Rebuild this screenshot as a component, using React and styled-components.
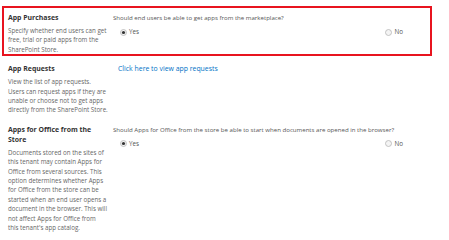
import styled, { createGlobalStyle } from "styled-components";

const GlobalStyle = createGlobalStyle`
  body {
    margin: 0;
    background: #fff;
    font-family: "Open Sans", "Noto Sans", sans-serif;
  }
`;

// description lines keep the wraps of the original settings page
const sections = [
  {
    title: ["App Purchases"],
    desc: [
      "Specify whether end users can get",
      "free, trial or paid apps from the",
      "SharePoint Store.",
    ],
    question: "Should end users be able to get apps from the marketplace?",
    highlight: true,
  },
  {
    title: ["App Requests"],
    desc: [
      "View the list of app requests.",
      "Users can request apps if they are",
      "unable or choose not to get apps",
      "directly from the SharePoint Store.",
    ],
    link: "Click here to view app requests",
  },
  {
    title: ["Apps for Office from the", "Store"],
    desc: [
      "Documents stored on the sites of",
      "this tenant may contain Apps for",
      "Office from several sources. This",
      "option determines whether Apps",
      "for Office from the store can be",
      "started when an end user opens a",
      "document in the browser. This will",
      "not affect Apps for Office from",
      "this tenant's app catalog.",
    ],
    question: "Should Apps for Office from the store be able to start when documents are opened in the browser?",
  },
];

const Radio = ({ checked }) => (
  <svg width="7" height="7" viewBox="0 0 7 7">
    <circle cx="3.5" cy="3.5" r="3" fill="#f4f4f4" stroke="#b5b5b5" strokeWidth="0.8" />
    {checked && <circle cx="3.5" cy="3.5" r="1.6" fill="#333" />}
  </svg>
);

const App = () => {
  return (
    <>
      <GlobalStyle />
      <Page>
        {sections.map((s, i) => (
          <Section key={i} $highlight={s.highlight}>
            <Info>
              <Title>
                {s.title.map((t, j) => (
                  <Line key={j}>{t}</Line>
                ))}
              </Title>
              <Desc>
                {s.desc.map((t, j) => (
                  <Line key={j}>{t}</Line>
                ))}
              </Desc>
            </Info>
            <Field>
              {s.link && <Link href="#">{s.link}</Link>}
              {s.question && (
                <>
                  <Question>{s.question}</Question>
                  <Choices>
                    <Choice>
                      <Radio checked />
                      Yes
                    </Choice>
                    <Choice>
                      <Radio />
                      No
                    </Choice>
                  </Choices>
                </>
              )}
            </Field>
          </Section>
        ))}
      </Page>
    </>
  );
};

export default App;

const Page = styled.div`
  padding: 6px 0 0 2px;
  width: 430px;
  display: flex;
  flex-direction: column;
`;

const Section = styled.div`
  display: grid;
  grid-template-columns: 105px 1fr;
  border: 2px solid ${(p) => (p.$highlight ? "#e8141f" : "transparent")};
  padding: ${(p) => (p.$highlight ? "5px" : "6px")} 0 0 4px;
`;

const Info = styled.div`
  padding-right: 4px;
`;

const Line = styled.span`
  display: block;
  white-space: nowrap;
`;

const Title = styled.div`
  font-size: 6.9px;
  font-weight: 700;
  color: #333;
  line-height: 10px;
  margin-bottom: 3px;
`;

const Desc = styled.div`
  font-size: 6.2px;
  color: #666;
  line-height: 9.4px;
`;

const Field = styled.div`
  display: flex;
  flex-direction: column;
`;

const Question = styled.div`
  font-size: 6.1px;
  color: #555;
  line-height: 10px;
`;

const Choices = styled.div`
  display: flex;
  justify-content: space-between;
  padding: 4px 27px 0 7px;
`;

const Choice = styled.label`
  display: flex;
  align-items: center;
  gap: 2px;
  font-size: 6.3px;
  color: #555;
  line-height: 10px;
`;

const Link = styled.a`
  font-size: 6.9px;
  color: #0072c6;
  text-decoration: none;
  line-height: 10px;
  padding-left: 5px;
`;
